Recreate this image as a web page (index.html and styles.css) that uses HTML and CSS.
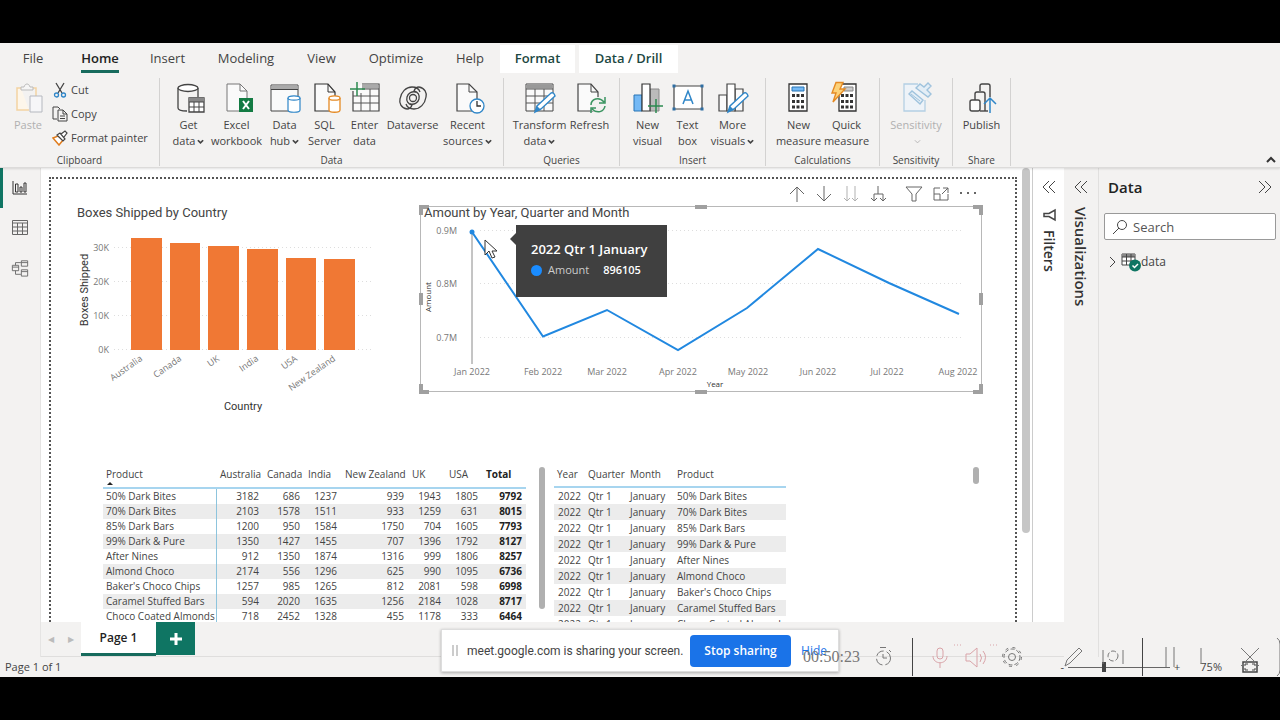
FILE: index.html
```html
<!DOCTYPE html>
<html lang="en">
<head>
<meta charset="utf-8">
<title>Report</title>
<link rel="stylesheet" href="styles.css">
</head>
<body>
<div class="app">
<header class="ribbon">
<nav class="tabs">
<button class="tab tab-file">File</button>
<button class="tab tab-home active">Home</button>
<button class="tab tab-insert">Insert</button>
<button class="tab tab-modeling">Modeling</button>
<button class="tab tab-view">View</button>
<button class="tab tab-optimize">Optimize</button>
<button class="tab tab-help">Help</button>
<button class="tab tab-format context">Format</button>
<button class="tab tab-drill context">Data / Drill</button>
</nav>
<div class="groups">
<section class="group g-clipboard">
<div class="tools">
<button class="tool w56 muted"><svg class="icon" viewBox="0 0 30 30"><path d="M8 5H4v22h12" fill="#fdf6ea" stroke="#f3d3a2" stroke-width="1.500"/><path d="M20 5h3v8" fill="none" stroke="#f3d3a2" stroke-width="1.500"/><path d="M8 7V4h3c1-4 5-4 6 0h3v3z" fill="#f5f5f5" stroke="#bbb"/><path d="M17 13h12v16H17z" fill="#f6f6f8" stroke="#b5b8bf"/></svg><span>Paste</span></button>
<div class="stack">
<button class="mini"><svg viewBox="0 0 16 16"><path d="M4 1l6 10M12 1L6 11" stroke="#444" stroke-width="1.3"/><circle cx="4.500" cy="13" r="2" fill="none" stroke="#2f86c8" stroke-width="1.300"/><circle cx="11.500" cy="13" r="2" fill="none" stroke="#2f86c8" stroke-width="1.300"/></svg>Cut</button>
<button class="mini"><svg viewBox="0 0 16 16"><path d="M5 13H1V1h5l2 2M6 4h5l4 4v7H6zM11 4v4h4M8 10h5M8 12.500h5" fill="none" stroke="#444"/></svg>Copy</button>
<button class="mini"><svg viewBox="0 0 16 16"><path d="M1 8l5-2 5 4-4 5z" fill="#fff" stroke="#e07d1e" stroke-width="1.500"/><path d="M5 5l3-2 5 6-2 2zM9 4l4-3 2 2-3 4" fill="#fff" stroke="#444" stroke-width="1.200"/></svg>Format painter</button>
</div>
</div>
<span class="group-name">Clipboard</span>
</section>
<section class="group g-data">
<div class="tools">
<button class="tool w48"><svg class="icon" viewBox="0 0 30 30"><path d="M4 5v20c0 2 3 3 9 3M24 5v9" fill="none" stroke="#444" stroke-width="1.300"/><ellipse cx="14" cy="5" rx="10" ry="3.500" fill="#fff" stroke="#444" stroke-width="1.300"/><path d="M15 15h15v14H15z" fill="#fff" stroke="#444" stroke-width="1.300"/><path d="M15 15h15v4H15z" fill="#888"/><path d="M15 19h15M15 24h15M20 19v10M25 19v10" stroke="#444"/></svg><span>Get<br>data<svg class="chev" viewBox="0 0 8 6"><path d="M1 1l3 3 3-3"/></svg></span></button>
<button class="tool w48"><svg class="icon" viewBox="0 0 30 30"><path d="M5 1h13l7 7v20H5z" fill="#fafafa" stroke="#777"/><path d="M18 1v7h7" fill="none" stroke="#777"/><path d="M17 15h14v14H17z" fill="#137b43"/><path d="M21 18l6 8M27 18l-6 8" stroke="#fff" stroke-width="2"/></svg><span>Excel<br>workbook</span></button>
<button class="tool w48"><svg class="icon" viewBox="0 0 30 30"><path d="M1 2h27v26H1z" fill="#fafafa" stroke="#444"/><path d="M1.500 2.500h26v4h-26z" fill="#aaa"/><path d="M1 6.500h27" stroke="#444"/><path d="M18 15v12c0 3 12 3 12 0V15" fill="#fff" stroke="#2f86c8" stroke-width="1.200"/><ellipse cx="24" cy="15" rx="6" ry="2.200" fill="#fff" stroke="#2f86c8" stroke-width="1.200"/></svg><span>Data<br>hub<svg class="chev" viewBox="0 0 8 6"><path d="M1 1l3 3 3-3"/></svg></span></button>
<button class="tool w32"><svg class="icon" viewBox="0 0 30 30"><path d="M5 1h13l7 8v19H5z" fill="#fafafa" stroke="#333" stroke-width="1.200"/><path d="M18 1v8h7" fill="none" stroke="#333"/><path d="M19 15v12c0 3 11 3 11 0V15" fill="#fff" stroke="#e58a24" stroke-width="1.300"/><ellipse cx="24.500" cy="15" rx="5.500" ry="2.200" fill="#fff" stroke="#e58a24" stroke-width="1.300"/></svg><span>SQL<br>Server</span></button>
<button class="tool w48"><svg class="icon" viewBox="0 0 30 30"><path d="M3 8v20h26V1H12" fill="#fafafa" stroke="#444" stroke-width="1.200"/><path d="M12 1.500h16.500v4H12z" fill="#aaa"/><path d="M12 6h17M3 13h26M3 20h26M11 10v18M20 6v22" stroke="#555"/><path d="M0 6h15M7-1v14" stroke="#2c8a50" stroke-width="1.500"/></svg><span>Enter<br>data</span></button>
<button class="tool w48"><svg class="icon" viewBox="0 0 28 30"><g fill="none" stroke="#444" stroke-width="1.300"><g id="swirl"><path d="M8 26C2 25 0 20 1 16C2 9 7 4 13 4C17 4 20 6 21 9"/><path d="M8 26C11 26 12 25 13 22C9 21 7 18 8 14C9 10 13 8 17 9"/></g><use href="#swirl" transform="rotate(180 14 15)"/><circle cx="14" cy="15" r="3.500"/></g></svg><span>Dataverse</span></button>
<button class="tool w62"><svg class="icon" viewBox="0 0 30 30"><path d="M4 1h12l8 8v19H4z" fill="#fafafa" stroke="#444" stroke-width="1.200"/><path d="M16 1v8h8" fill="none" stroke="#444"/><circle cx="24" cy="23" r="7" fill="#fff" stroke="#2f86c8" stroke-width="1.300"/><path d="M24 18v5h4" fill="none" stroke="#333" stroke-width="1.300"/></svg><span>Recent<br>sources<svg class="chev" viewBox="0 0 8 6"><path d="M1 1l3 3 3-3"/></svg></span></button>
</div>
<span class="group-name">Data</span>
</section>
<section class="group g-queries">
<div class="tools">
<button class="tool w56"><svg class="icon" viewBox="0 0 30 30"><path d="M1 1h27v27H1z" fill="#fafafa" stroke="#444"/><path d="M1.500 1.500h26v4h-26z" fill="#999"/><path d="M1 6h27M1 13h27M1 20h27M10 6v22M19 6v22" stroke="#555"/><path d="M10 29l2-6 14-13q3-1 4 3l-14 13z" fill="#fff" stroke="#2f86c8" stroke-width="1.400"/><path d="M10 29l2-6 4 4z" fill="#2f86c8"/></svg><span>Transform<br>data<svg class="chev" viewBox="0 0 8 6"><path d="M1 1l3 3 3-3"/></svg></span></button>
<button class="tool w44"><svg class="icon" viewBox="0 0 30 30"><path d="M3 1h13l7 8v19H3z" fill="#fafafa" stroke="#444" stroke-width="1.200"/><path d="M16 1v8h7" fill="none" stroke="#444"/><circle cx="23" cy="22" r="8" fill="#f3f2f1"/><path d="M16 22c0-6 8-9 13-3M30 14v6h-6M30 23c-1 6-8 8-13 3M16 30v-5h5" fill="none" stroke="#3a9460" stroke-width="1.500"/></svg><span>Refresh</span></button>
</div>
<span class="group-name">Queries</span>
</section>
<section class="group g-insert">
<div class="tools">
<button class="tool w40"><svg class="icon" viewBox="0 0 30 30"><path d="M1 12h8v16H1z" fill="#74b9f5" stroke="#2775b5"/><path d="M17 6h9v22h-9z" fill="#bbb" stroke="#888"/><path d="M9 1h8v27H9z" fill="#fff" stroke="#333" stroke-width="1.200"/><path d="M15 23h15M23 16v14" stroke="#2c8a50" stroke-width="1.500"/></svg><span>New<br>visual</span></button>
<button class="tool w40"><svg class="icon wide" viewBox="0 0 32 30"><path d="M2 3h28v23H2z" fill="#fff" stroke="#444" stroke-width="1.200"/><path d="M11 21l5-13 5 13M13 17h6" fill="none" stroke="#2f86c8" stroke-width="1.500"/><path d="M.5 1.500h3v3h-3zM28.500 1.500h3v3h-3zM.5 24.500h3v3h-3zM28.500 24.500h3v3h-3z" fill="#2f6ea3"/></svg><span>Text<br>box</span></button>
<button class="tool w50"><svg class="icon" viewBox="0 0 30 30"><path d="M1 12h8v16H1zM17 6h8v22h-8z" fill="#fafafa" stroke="#444" stroke-width="1.200"/><path d="M9 1h8v27H9z" fill="#fff" stroke="#444" stroke-width="1.200"/><path d="M10 29l2-6 14-13q3-1 4 3l-14 13z" fill="#fff" stroke="#2f86c8" stroke-width="1.400"/><path d="M10 29l2-6 4 4z" fill="#2f86c8"/></svg><span>More<br>visuals<svg class="chev" viewBox="0 0 8 6"><path d="M1 1l3 3 3-3"/></svg></span></button>
</div>
<span class="group-name">Insert</span>
</section>
<section class="group g-calc">
<div class="tools">
<button class="tool w48"><svg class="icon" viewBox="0 0 30 30"><path d="M5 1h18v27H5z" fill="#fff" stroke="#333" stroke-width="1.300"/><path d="M8 4h12v4H8z" fill="#74b9f5" stroke="#2775b5"/><path d="M8 12.500h12M8 18.500h12M8 24h12" stroke="#333" stroke-width="3" stroke-dasharray="3 1.500"/></svg><span>New<br>measure</span></button>
<button class="tool w48"><svg class="icon" viewBox="0 0 30 30"><path d="M7 1h17v27H7z" fill="#fff" stroke="#333" stroke-width="1.300"/><path d="M12 4h9v4h-9z" fill="#ccc" stroke="#888"/><path d="M9 12.500h12M9 18.500h12M9 24h12" stroke="#333" stroke-width="3" stroke-dasharray="3 1.500"/><path d="M4-.5h7L8 6h5L1 19l3-9H0z" fill="#fcd27a" stroke="#e58a24" stroke-width="1.400"/></svg><span>Quick<br>measure</span></button>
</div>
<span class="group-name">Calculations</span>
</section>
<section class="group g-sens">
<div class="tools">
<button class="tool w62 muted"><svg class="icon" viewBox="0 0 30 30"><path d="M17 1H3v27h21V17" fill="#eef3f8" stroke="#b4cfe3" stroke-width="1.300"/><path d="M8 11l3-3 11 9-3 4zM15 5l4-4 4 3 4-4 3 3-4 4 4 4-3 3z" fill="#e4eef6" stroke="#9fc3dd" stroke-width="1.400"/><path d="M10 11l9 7" stroke="#9fc3dd"/></svg><span>Sensitivity<br><svg class="chev thin" viewBox="0 0 8 6"><path d="M1 1l3 3 3-3"/></svg></span></button>
</div>
<span class="group-name">Sensitivity</span>
</section>
<section class="group g-share">
<div class="tools">
<button class="tool w56"><svg class="icon" viewBox="0 0 30 30"><path d="M13 8V3q0-2 2-2h6q2 0 2 2v11M8 17v-6q0-2 2-2h6q2 0 2 2v17" fill="none" stroke="#444" stroke-width="1.400"/><rect x="3" y="17" width="10" height="11" rx="2" fill="#fafafa" stroke="#444" stroke-width="1.400"/><path d="M13 28h8" stroke="#444" stroke-width="1.400"/><path d="M23 30V15M17 21l6-6 6 6" fill="none" stroke="#2f86c8" stroke-width="1.500"/></svg><span>Publish</span></button>
</div>
<span class="group-name">Share</span>
</section>
<button class="collapse" aria-label="Collapse ribbon"><svg viewBox="0 0 10 8"><path d="M1 6l4-4 4 4"/></svg></button>
</div>
</header>

<main class="workspace">
<nav class="rail">
<button class="rail-item on" aria-label="Report view"><svg viewBox="0 0 18 18"><path d="M2 2v13h14M4.500 5h2.500v8H4.500zM9 8h2v5H9zM13 4h2v9h-2z"/></svg></button>
<button class="rail-item" aria-label="Table view"><svg viewBox="0 0 18 18"><path d="M1.500 1.500h15v14h-15zM1.500 4h15M1.500 8h15M1.500 12h15M6.500 4v11M11.500 4v11"/></svg></button>
<button class="rail-item" aria-label="Model view"><svg viewBox="0 0 20 20"><path d="M1.500 7h7v6h-7zM1.500 9h7M11.500 2h7v6h-7zM11.500 4h7M11.500 12h7v7h-7zM11.500 14h7M5 7V4h6M5 13v4h6"/></svg></button>
</nav>

<div class="center">
<div class="stage">
<div class="canvas-wrap">
<div class="canvas">
<div class="visual-row">
<svg class="bar-chart" viewBox="51 179 364 266" role="img" aria-label="Boxes Shipped by Country">
<text class="chart-title" x="77" y="217">Boxes Shipped by Country</text>
<g class="grid"><path d="M114 247.500H371M114 281.500H371M114 315.500H371M114 349.500H371"/></g>
<g class="tick" text-anchor="end"><text x="109" y="251">30K</text><text x="109" y="285">20K</text><text x="109" y="319">10K</text><text x="109" y="353">0K</text></g>
<g fill="#f07834"><rect x="131" y="238" width="31" height="112"/><rect x="170" y="243" width="30" height="107"/><rect x="208" y="246" width="31" height="104"/><rect x="247" y="249" width="31" height="101"/><rect x="286" y="258" width="30" height="92"/><rect x="324" y="259" width="31" height="91"/></g>
<g class="tick" text-anchor="end"><text transform="translate(143 360) rotate(-35)">Australia</text><text transform="translate(182 360) rotate(-35)">Canada</text><text transform="translate(220 360) rotate(-35)">UK</text><text transform="translate(259 360) rotate(-35)">India</text><text transform="translate(298 360) rotate(-35)">USA</text><text transform="translate(336 360) rotate(-35)">New Zealand</text></g>
<text class="axis-title" transform="translate(88 290) rotate(-90)" text-anchor="middle">Boxes Shipped</text>
<text class="axis-title" x="243" y="410" text-anchor="middle">Country</text>
</svg>
<section class="line-visual">
<div class="visual-tools">
<button aria-label="Drill up"><svg viewBox="0 0 18 18"><path d="M9 17V2M2 9l7-7 7 7"/></svg></button>
<button aria-label="Drill down"><svg viewBox="0 0 18 18"><path d="M9 1v15M2 9l7 7 7-7"/></svg></button>
<button class="faint" aria-label="Next level"><svg viewBox="0 0 18 18"><path d="M5 1v15M2 13l3 3 3-3M13 1v15M10 13l3 3 3-3"/></svg></button>
<button aria-label="Expand all"><svg viewBox="0 0 18 18"><path d="M9 1v8M5 16V9h9v7M2 13l3 3 3-3M11 13l3 3 3-3"/></svg></button>
<button class="spaced" aria-label="Filters"><svg viewBox="0 0 18 18"><path d="M1 2h16l-6 7v7H7V9z"/></svg></button>
<button aria-label="Focus mode"><svg viewBox="0 0 18 18"><path d="M8 3H2v12h14V9M2 9h6v6M10 9l6-6M11 3h5v5"/></svg></button>
<button aria-label="More options"><svg viewBox="0 0 18 18"><path d="M1 8h2M8 8h2M15 8h2" stroke-width="2"/></svg></button>
</div>
<svg class="line-chart" viewBox="415 204 570 190" role="img" aria-label="Amount by Year, Quarter and Month">
<path d="M420.500 206.500H981.500V391.500H420.500z" fill="none" stroke="#b8b8b8"/>
<g fill="#a0a0a0"><path d="M419 205h10v4h-6v6h-4zM983 205h-10v4h6v6h4zM419 394h10v-4h-6v-6h-4zM983 394h-10v-4h6v-6h4zM695 205h12v4h-12zM695 390h12v4h-12zM419 293h4v12h-4zM979 293h4v12h-4z"/></g>
<text class="chart-title" x="424" y="217">Amount by Year, Quarter and Month</text>
<g class="grid"><path d="M480 230.500H964M480 283.500H964M480 337.500H964"/></g>
<g class="tick" text-anchor="end"><text x="457" y="234">0.9M</text><text x="457" y="287">0.8M</text><text x="457" y="341">0.7M</text></g>
<path d="M472 232V364" stroke="#8a8a8a"/>
<path d="M472 232L543 336.500L607 310L678 350L747 308L818 249L889 283L959 314" fill="none" stroke="#2188e0" stroke-width="2"/>
<circle cx="472" cy="232" r="2.500" fill="#2188e0"/>
<g class="tick" text-anchor="middle"><text x="472" y="375">Jan 2022</text><text x="543" y="375">Feb 2022</text><text x="607" y="375">Mar 2022</text><text x="678" y="375">Apr 2022</text><text x="748" y="375">May 2022</text><text x="818" y="375">Jun 2022</text><text x="887" y="375">Jul 2022</text><text x="958" y="375">Aug 2022</text></g>
<text class="small-title" transform="translate(431 297) rotate(-90)" text-anchor="middle">Amount</text>
<text class="small-title" x="715" y="387" text-anchor="middle">Year</text>
</svg>
<div class="tooltip"><strong>2022 Qtr 1 January</strong><div class="tooltip-line"><i></i><span>Amount</span><b>896105</b></div></div>
<svg class="cursor" viewBox="0 0 14 20"><path d="M1 1v15l4-4 3 7 3-1-3-6h5z" fill="#fff" stroke="#333"/></svg>
</section>
</div>
<div class="table-row">
<table class="matrix">
<colgroup><col class="c113"><col class="c47"><col class="c41"><col class="c37"><col class="c67"><col class="c37"><col class="c37"><col class="c44"></colgroup>
<thead><tr><th class="sorted">Product</th><th>Australia</th><th>Canada</th><th>India</th><th>New Zealand</th><th>UK</th><th>USA</th><th class="total">Total</th></tr></thead>
<tbody>
<tr><th>50% Dark Bites</th><td>3182</td><td>686</td><td>1237</td><td>939</td><td>1943</td><td>1805</td><td>9792</td></tr>
<tr><th>70% Dark Bites</th><td>2103</td><td>1578</td><td>1511</td><td>933</td><td>1259</td><td>631</td><td>8015</td></tr>
<tr><th>85% Dark Bars</th><td>1200</td><td>950</td><td>1584</td><td>1750</td><td>704</td><td>1605</td><td>7793</td></tr>
<tr><th>99% Dark &amp; Pure</th><td>1350</td><td>1427</td><td>1455</td><td>707</td><td>1396</td><td>1792</td><td>8127</td></tr>
<tr><th>After Nines</th><td>912</td><td>1350</td><td>1874</td><td>1316</td><td>999</td><td>1806</td><td>8257</td></tr>
<tr><th>Almond Choco</th><td>2174</td><td>556</td><td>1296</td><td>625</td><td>990</td><td>1095</td><td>6736</td></tr>
<tr><th>Baker's Choco Chips</th><td>1257</td><td>985</td><td>1265</td><td>812</td><td>2081</td><td>598</td><td>6998</td></tr>
<tr><th>Caramel Stuffed Bars</th><td>594</td><td>2020</td><td>1635</td><td>1256</td><td>2184</td><td>1028</td><td>8717</td></tr>
<tr><th>Choco Coated Almonds</th><td>718</td><td>2452</td><td>1328</td><td>455</td><td>1178</td><td>333</td><td>6464</td></tr>
</tbody>
</table>
<div class="thumb long"></div>
<table class="detail">
<colgroup><col class="c30"><col class="c42"><col class="c47"><col class="c113"></colgroup>
<thead><tr><th>Year</th><th>Quarter</th><th>Month</th><th>Product</th></tr></thead>
<tbody>
<tr><td>2022</td><td>Qtr 1</td><td>January</td><td>50% Dark Bites</td></tr>
<tr><td>2022</td><td>Qtr 1</td><td>January</td><td>70% Dark Bites</td></tr>
<tr><td>2022</td><td>Qtr 1</td><td>January</td><td>85% Dark Bars</td></tr>
<tr><td>2022</td><td>Qtr 1</td><td>January</td><td>99% Dark &amp; Pure</td></tr>
<tr><td>2022</td><td>Qtr 1</td><td>January</td><td>After Nines</td></tr>
<tr><td>2022</td><td>Qtr 1</td><td>January</td><td>Almond Choco</td></tr>
<tr><td>2022</td><td>Qtr 1</td><td>January</td><td>Baker's Choco Chips</td></tr>
<tr><td>2022</td><td>Qtr 1</td><td>January</td><td>Caramel Stuffed Bars</td></tr>
<tr><td>2022</td><td>Qtr 1</td><td>January</td><td>Choco Coated Almonds</td></tr>
</tbody>
</table>
<div class="thumb short"></div>
</div>
</div>
</div>
<div class="scroll"><div class="scroll-thumb"></div></div>
<aside class="side filters">
<button class="side-toggle" aria-label="Expand filters"><svg viewBox="0 0 14 14"><path d="M7 1L1 7l6 6M13 1L7 7l6 6"/></svg></button>
<svg class="funnel" viewBox="0 0 14 14"><path d="M13 2v10L7 8.500H2v-3h5z"/></svg>
<h2>Filters</h2>
</aside>
</div>
<div class="pages">
<button class="step" aria-label="Previous page">◀</button><button class="step" aria-label="Next page">▶</button>
<button class="page-tab">Page 1</button>
<button class="page-add" aria-label="New page"><svg viewBox="0 0 12 12"><path d="M6 0v12M0 6h12"/></svg></button>
</div>
</div>

<aside class="side viz">
<button class="side-toggle" aria-label="Expand visualizations"><svg viewBox="0 0 14 14"><path d="M7 1L1 7l6 6M13 1L7 7l6 6"/></svg></button>
<h2>Visualizations</h2>
</aside>
<aside class="data-pane">
<div class="data-head"><h2>Data</h2><button class="side-toggle" aria-label="Collapse data"><svg viewBox="0 0 14 14"><path d="M1 1l6 6-6 6M7 1l6 6-6 6"/></svg></button></div>
<label class="search"><svg viewBox="0 0 16 16"><circle cx="10" cy="6" r="4.500"/><path d="M7 9l-6 6"/></svg><input type="text" placeholder="Search" aria-label="Search"></label>
<button class="data-item"><svg class="arrow" viewBox="0 0 8 12"><path d="M1 1l5 5-5 5"/></svg><svg class="table-icon" viewBox="0 0 20 20"><path d="M1 2h13v11H1z" fill="#fff" stroke="#444"/><path d="M1 2h13v3H1z" fill="#888"/><path d="M1 5h13M1 9h13M5.500 2v11M10 2v11" stroke="#444"/><circle cx="14" cy="13.500" r="6" fill="#0f7563"/><path d="M11.500 13.500l2 2 3.500-3.500" fill="none" stroke="#fff" stroke-width="1.500"/></svg>data</button>
</aside>
</main>

<footer class="status"><span>Page 1 of 1</span>
<div class="zoom"><span>-</span><input type="range" min="10" max="400" value="145" aria-label="Zoom"><span>+</span><span class="zoom-value">75%</span><svg viewBox="0 0 16 12"><path d="M1 1h14v10H1z" fill="none" stroke="#444" stroke-width="1.500"/><path d="M3 5V3h3M13 5V3h-3M3 7v2h3M13 7v2h-3" fill="none" stroke="#444"/></svg></div>
</footer>

<div class="share-bar"><i class="grip"></i><span class="share-text">meet.google.com is sharing your screen.</span><button class="stop">Stop sharing</button><a href="#">Hide</a></div>
<div class="recorder">
<span>00:50:23</span>
<svg viewBox="870 630 410 46">
<path d="M912.500 638v38M1142.500 638v38" stroke="#444"/>
<g fill="none" stroke="#777"><circle cx="883.500" cy="658" r="7" stroke-dasharray="9 3"/><path d="M883 654v4h4M880 647.500h6M889 650l2 2"/></g>
<g fill="none" stroke="#d9a3a8"><rect x="937" y="648" width="6" height="11" rx="3"/><path d="M933 656c0 9 14 9 14 0M940 663v5M966 654h4l7-6v19l-7-6h-4zM980 654q3 4 0 8M983 651q5 6 0 13"/><path d="M954 645h7M990 645h7" stroke-dasharray="1 2"/></g>
<g fill="none" stroke="#777"><circle cx="1012" cy="657" r="8" stroke-dasharray="4 2"/><circle cx="1012" cy="657" r="9.500" stroke-dasharray="3 4.500"/><circle cx="1012" cy="657" r="3.500"/><path d="M1065 666l2-6 12-12 3 3-12 12zM1103 664v-14M1123 650v14M1166 647v20M1174 647v20M1201 648v16M1241 648l18 18M1259 648l-18 18"/><circle cx="1113" cy="656" r="5" stroke-dasharray="5 2"/></g>
<path d="M1277 638q3 2 3 6v26q0 4-3 6" fill="none" stroke="#777"/>
</svg>
</div>
</div>
</body>
</html>
```
FILE: styles.css
```css
* { box-sizing: border-box; }
body { margin: 0; background: #000; color: #444; font: 12px/16px "Open Sans", "Noto Sans", sans-serif; }
button { border: 0; padding: 0; margin: 0; background: none; color: inherit; font: inherit; white-space: nowrap; }
h2 { margin: 0; }
.app { position: relative; display: flex; flex-direction: column; height: calc(100vh - 86px); margin: 43px 0; background: #f3f2f1; overflow: hidden; }

.ribbon { flex: none; border-bottom: 1px solid #dcdbda; box-shadow: 0 1px 2px rgba(0,0,0,.12); z-index: 1; }
.tabs { display: flex; height: 30px; padding-top: 2px; }
.tab { position: relative; font-size: 13px; line-height: 26px; padding-bottom: 2px; flex: none; }
.tab.active { font-weight: 600; color: #222; }
.tab.active::after { content: ""; position: absolute; left: 15px; right: 15px; bottom: 0; height: 3px; background: #176b5d; }
.tab.context { background: #fff; color: #1c4842; font-weight: 600; }
.tab-file { width: 66px; }
.tab-home { width: 68px; }
.tab-insert { width: 67px; }
.tab-modeling { width: 90px; }
.tab-view { width: 61px; }
.tab-optimize { width: 88px; }
.tab-help { width: 60px; }
.tab-format { width: 75px; margin-right: 4px; }
.tab-drill { width: 99px; }

.groups { display: flex; padding: 5px 0 1px; height: 94px; }
.group { display: flex; flex-direction: column; align-items: center; justify-content: space-between; border-right: 1px solid #d3d2d1; flex: none; }
.g-clipboard { width: 160px; }
.g-data { width: 344px; }
.g-queries { width: 116px; }
.g-insert { width: 146px; }
.g-calc { width: 114px; }
.g-sens { width: 73px; }
.g-share { width: 58px; }
.tools { display: flex; align-self: stretch; justify-content: center; padding-top: 5px; }
.g-clipboard .tools { justify-content: flex-start; padding-top: 0; }
.g-clipboard .tool { padding-top: 5px; }
.tool { display: flex; flex-direction: column; align-items: center; flex: none; gap: 4px; line-height: 16px; font-size: 11px; }
.icon { width: 30px; height: 30px; overflow: visible; flex: none; }
.icon.wide { width: 32px; }
.w32 { width: 32px; }
.w40 { width: 40px; }
.w44 { width: 44px; }
.w48 { width: 48px; }
.w50 { width: 50px; }
.w56 { width: 56px; }
.w62 { width: 62px; }
.muted { color: #b0b0b0; }
.chev { width: 7px; height: 6px; margin-left: 2px; fill: none; stroke: currentColor; stroke-width: 2; }
.chev.thin { stroke-width: 1; }
.stack { display: flex; flex-direction: column; }
.mini { display: flex; align-items: center; gap: 3px; height: 24px; font-size: 11px; margin-left: -4px; }
.mini svg { width: 16px; height: 16px; }
.group-name { font-size: 10px; line-height: 12px; }
.collapse { margin-left: auto; align-self: flex-end; padding: 0 4px 2px; line-height: 8px; }
.collapse svg { width: 10px; height: 8px; fill: none; stroke: #333; stroke-width: 2; }

.workspace { display: flex; flex: 1; min-height: 0; }
.rail { flex: none; width: 41px; display: flex; flex-direction: column; border-right: 1px solid #e5e4e3; }
.rail-item { height: 40px; display: flex; align-items: center; justify-content: center; border-left: 3px solid transparent; padding-right: 3px; }
.rail-item.on { border-left-color: #0f7563; }
.rail-item svg { width: 18px; height: 18px; fill: none; stroke: #666; stroke-width: 1; }
.rail-item.on svg { stroke: #333; }
.center { flex: 1; min-width: 0; display: flex; flex-direction: column; }
.stage { flex: 1; min-height: 0; display: flex; background: #fff; overflow: hidden; }
.canvas-wrap { flex: 1; min-width: 0; padding: 9px 3px 0 8px; overflow: hidden; }
.canvas { border: 2px dotted #555; height: 560px; }
.visual-row { display: flex; align-items: flex-start; justify-content: space-between; padding-right: 30px; }
.bar-chart { width: 364px; height: 266px; flex: none; }
.line-visual { position: relative; width: 570px; flex: none; }
.visual-tools { display: flex; justify-content: flex-end; gap: 9px; height: 25px; padding: 5px 8px 0 0; }
.visual-tools svg { width: 18px; height: 18px; fill: none; stroke: #666; display: block; }
.visual-tools .faint { opacity: .5; }
.visual-tools .spaced { margin-left: 9px; }
.line-chart { display: block; width: 570px; height: 190px; }
.chart-title { font: 13px Roboto, sans-serif; fill: #444; }
.axis-title { font: 11px Roboto, sans-serif; fill: #333; }
.small-title { font-size: 8px; fill: #333; }
.tick { font-size: 9px; fill: #777; }
.grid path { stroke: #ddd; stroke-dasharray: 1 3; fill: none; }
.tooltip { position: absolute; left: 101px; top: 46px; width: 151px; height: 72px; padding: 16px 15px; background: #404040; color: #fff; font-size: 13px; line-height: 16px; white-space: nowrap; }
.tooltip::before { content: ""; position: absolute; left: -6px; top: 8px; border: solid transparent; border-width: 6px 6px 6px 0; border-right-color: #404040; }
.tooltip strong { font-weight: 600; }
.tooltip-line { display: flex; align-items: center; gap: 6px; margin-top: 5px; font-size: 11px; color: #ccc; }
.tooltip-line i { width: 11px; height: 11px; border-radius: 50%; background: #1a8cff; }
.tooltip-line b { margin-left: 8px; color: #fff; font-weight: 600; }
.cursor { position: absolute; left: 69px; top: 60px; width: 14px; height: 20px; }

.table-row { display: flex; align-items: flex-start; padding: 20px 36px 0 52px; }
table { border-collapse: collapse; table-layout: fixed; font-size: 10px; line-height: 15px; flex: none; }
.matrix { width: 423px; }
.detail { width: 232px; margin-left: 9px; }
th, td { padding: 0 4px; white-space: nowrap; font-weight: 400; text-align: left; }
th:first-child { padding-left: 3px; }
thead th { height: 23px; padding-bottom: 4px; border-bottom: 2px solid #a7d5ef; }
.detail thead th { height: 22px; padding-bottom: 3px; }
.sorted { position: relative; }
.sorted::after { content: ""; position: absolute; left: 4px; bottom: 2px; border: solid transparent; border-width: 0 3px 3px; border-bottom-color: #222; }
.matrix td { text-align: right; }
.matrix tbody th { border-right: 1px solid #8dc4dd; }
.matrix td:last-child, .matrix .total { font-weight: 700; color: #222; }
.detail tbody { line-height: 16px; }
tbody tr:nth-child(even) { background: #ececec; }
.c30 { width: 30px; }
.c37 { width: 37px; }
.c41 { width: 41px; }
.c42 { width: 42px; }
.c44 { width: 44px; }
.c47 { width: 47px; }
.c67 { width: 67px; }
.c113 { width: 113px; }
.thumb { width: 6px; border-radius: 3px; background: #b0b0b0; flex: none; margin-top: 2px; }
.thumb.long { height: 142px; margin-left: 13px; }
.thumb.short { height: 17px; margin-left: auto; }
.scroll { width: 13px; flex: none; padding-left: 2px; border-right: 1px solid #ccc; }
.scroll-thumb { width: 8px; height: 365px; border-radius: 4px; background: #c6c6c6; }

.side { flex: none; display: flex; flex-direction: column; align-items: center; padding-top: 12px; }
.side-toggle { height: 14px; line-height: 14px; }
.side-toggle svg, .funnel { width: 14px; height: 14px; fill: none; stroke: #444; display: block; }
.side h2 { writing-mode: vertical-rl; font-size: 14px; line-height: 18px; font-weight: 600; color: #333; }
.filters { width: 31px; }
.funnel { margin-top: 14px; stroke-width: 1.5; }
.filters h2 { margin-top: 8px; }
.viz { width: 35px; border-right: 1px solid #e1e0df; }
.viz h2 { margin-top: 13px; font-size: 15px; }
.data-pane { flex: none; width: 181px; padding: 9px 4px 0 5px; }
.data-head { display: flex; justify-content: space-between; align-items: center; padding: 0 4px; }
.data-head h2 { font-size: 15px; line-height: 20px; font-weight: 600; color: #222; }
.search { display: flex; align-items: center; gap: 5px; height: 27px; margin-top: 16px; padding: 0 7px; background: #fff; border: 1px solid #999; border-radius: 2px; }
.search svg { width: 16px; height: 16px; fill: none; stroke: #444; flex: none; }
.search input { width: 100%; border: 0; outline: 0; padding: 0; background: none; font: 13px "Open Sans", sans-serif; }
.search input::placeholder { color: #555; }
.data-item { display: flex; align-items: center; margin-top: 11px; padding-left: 5px; height: 22px; }
.arrow { width: 8px; height: 12px; fill: none; stroke: #444; margin-right: 4px; }
.table-icon { width: 20px; height: 20px; }

.pages { display: flex; height: 35px; flex: none; border-bottom: 1px solid #dfdedd; }
.step { width: 20px; color: #bbb; font-size: 8px; }
.page-tab { width: 75px; background: #fff; border-bottom: 3px solid #176b5d; font-size: 12px; font-weight: 600; color: #222; }
.page-add { width: 39px; height: 33px; background: #0f7563; }
.page-add svg { width: 12px; height: 12px; stroke: #fff; stroke-width: 3; vertical-align: middle; }
.status { flex: none; display: flex; align-items: center; justify-content: space-between; height: 20px; padding: 0 22px 0 5px; font-size: 11px; }
.zoom { display: flex; align-items: center; gap: 4px; }
.zoom input { appearance: none; width: 102px; height: 1px; margin: 0; background: #666; }
.zoom input::-webkit-slider-thumb { appearance: none; width: 4px; height: 10px; background: #444; }
.zoom-value { margin: 0 16px; }
.zoom svg { width: 16px; height: 12px; }

.share-bar { position: absolute; left: 441px; bottom: 5px; z-index: 2; display: flex; align-items: center; width: 398px; height: 43px; padding: 0 11px 0 10px; background: #fff; border: 1px solid #ddd; box-shadow: 0 1px 3px rgba(0,0,0,.3); font-size: 12px; white-space: nowrap; }
.share-text { font-family: Roboto, sans-serif; }
.grip { flex: none; width: 6px; height: 11px; margin-right: 9px; border: solid #ccc; border-width: 0 2px; }
.stop { flex: none; margin-left: auto; width: 101px; height: 32px; border-radius: 4px; background: #1a73e8; color: #fff; font-weight: 600; }
.share-bar a { margin-left: 10px; color: #1a73e8; text-decoration: none; }
.recorder { position: absolute; right: 0; bottom: 1px; z-index: 3; display: flex; align-items: center; pointer-events: none; }
.recorder span { font: 16px "Liberation Serif", serif; color: #777; margin: 8px 10px 0 0; }
.recorder svg { width: 410px; height: 46px; }
```
